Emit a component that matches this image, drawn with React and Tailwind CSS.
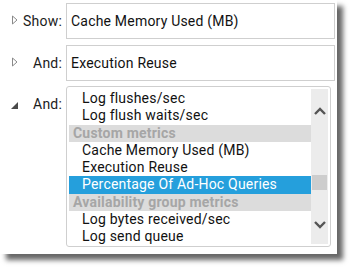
import React from 'react';

const items = [
  { label: 'Log flushes/sec' },
  { label: 'Log flush waits/sec' },
  { label: 'Custom metrics', header: true },
  { label: 'Cache Memory Used (MB)' },
  { label: 'Execution Reuse' },
  { label: 'Percentage Of Ad-Hoc Queries', selected: true },
  { label: 'Availability group metrics', header: true },
  { label: 'Log bytes received/sec' },
  { label: 'Log send queue' },
];

const HollowArrow = () => (
  <svg width="6" height="10" viewBox="0 0 6 10" className="shrink-0 ml-[1px] -mt-[2px]">
    <path d="M0.5 1 L5 5 L0.5 9 Z" fill="none" stroke="#8a8a8a" strokeWidth="1" />
  </svg>
);

const FilledArrow = () => (
  <svg width="7" height="7" viewBox="0 0 7 7" className="shrink-0 mt-[3px]">
    <path d="M7 0 L7 7 L0 7 Z" fill="#4a4a4a" />
  </svg>
);

const Chevron = ({ up }) => (
  <svg width="12" height="8" viewBox="0 0 12 8">
    <path
      d={up ? 'M1 7 L6 2 L11 7' : 'M1 1 L6 6 L11 1'}
      fill="none"
      stroke="#555"
      strokeWidth="2.4"
    />
  </svg>
);

const Label = ({ text }) => (
  <div className="w-[66px] shrink-0 flex items-center pl-[11px] pr-[4px]">
    <HollowArrow />
    <span className="ml-auto text-[14px] text-[#1c1c1c]">{text}</span>
  </div>
);

export default function App() {
  return (
    <div className="w-[351px] h-[271px] bg-white" style={{ fontFamily: 'Roboto, "Liberation Sans", sans-serif' }}>
      <div className="w-[337px] h-[254px] bg-white shadow-[6px_6px_5px_rgba(0,0,0,0.6)] pt-[3px] flex flex-col tracking-[0.2px]">
        {/* Show row */}
        <div className="flex h-[36px]">
          <Label text="Show:" />
          <div className="w-[269px] border border-[#cfcfcf] flex items-center px-[4px] text-[14px] text-[#111]">
            Cache Memory Used (MB)
          </div>
        </div>

        {/* And row */}
        <div className="flex h-[36px] mt-[6px]">
          <Label text="And:" />
          <div className="w-[269px] border border-[#cfcfcf] flex items-center px-[4px] text-[14px] text-[#111]">
            Execution Reuse
          </div>
        </div>

        {/* Expanded list */}
        <div className="flex mt-[5px]">
          <div className="w-[66px] h-[36px] shrink-0 flex items-center pl-[11px] pr-[4px]">
            <FilledArrow />
            <span className="ml-auto text-[14px] text-[#1c1c1c]">And:</span>
          </div>
          <div className="w-[265px] h-[161px] border border-[#cfcfcf] rounded-[3px] flex p-[2px] overflow-hidden">
            <div className="flex-1 pt-[1px]">
              {items.map((it) => (
                <div
                  key={it.label}
                  className={`h-[17.25px] flex items-center whitespace-nowrap text-[14px] ${
                    it.header
                      ? 'bg-[#dcdcdc] text-[#a6a6a6] font-bold pl-[4px]'
                      : it.selected
                      ? 'bg-[#259fdc] text-white pl-[13px]'
                      : 'text-[#111] pl-[13px]'
                  }`}
                >
                  {it.label}
                </div>
              ))}
            </div>
            <div className="w-[17px] bg-[#ececec] flex flex-col items-center relative">
              <div className="mt-[18px]">
                <Chevron up />
              </div>
              <div className="absolute left-[1px] right-[1px] top-[86px] h-[15px] bg-[#cdcdcd]" />
              <div className="mt-auto mb-[15px]">
                <Chevron />
              </div>
            </div>
          </div>
        </div>
      </div>
    </div>
  );
}
